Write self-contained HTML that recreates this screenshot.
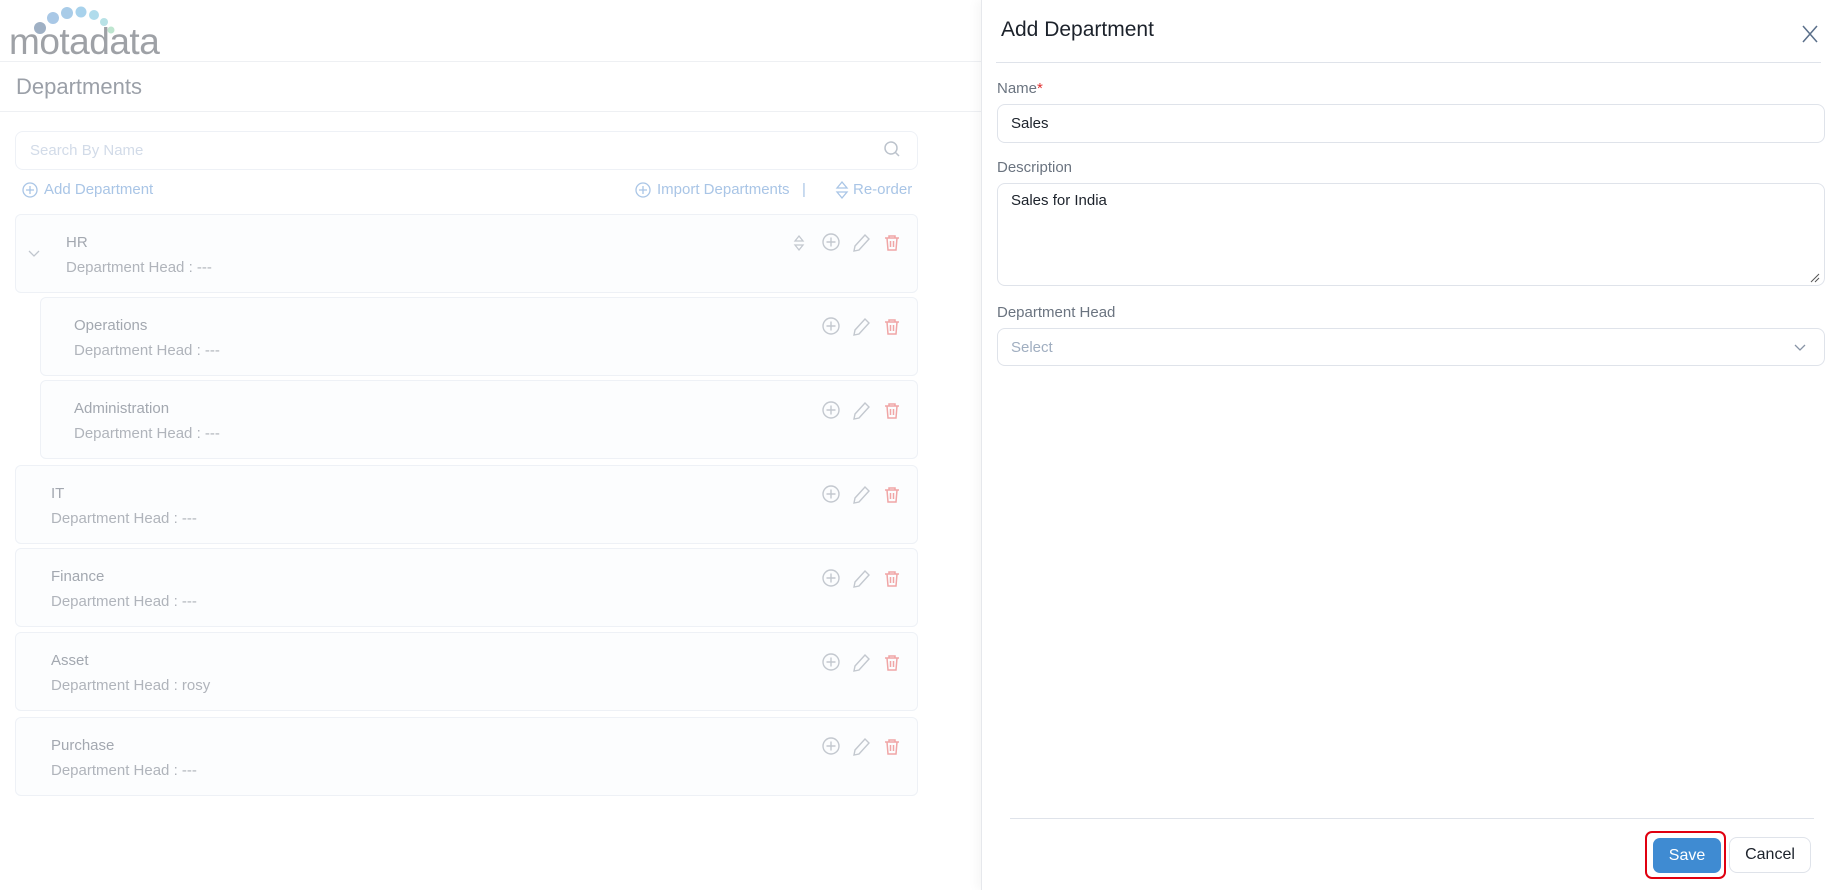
<!DOCTYPE html>
<html><head><style>
*{box-sizing:border-box;margin:0;padding:0}
body{width:1840px;height:890px;position:relative;overflow:hidden;background:#fff;font-family:"Liberation Sans",sans-serif}
.a{position:absolute}
.card{position:absolute;left:15px;width:903px;height:79px;border:1px solid #eef1f6;border-radius:6px;background:#fcfdfe}
.t{position:absolute;font-size:15px;color:#a3a8b0}
.h{position:absolute;font-size:15px;color:#b0b4bb}
</style></head><body>
<!-- left -->
<svg class="a" style="left:9px;top:6px" width="170" height="52">
<circle cx="31" cy="22" r="6" fill="#9fb0c4"/><circle cx="44" cy="12" r="6" fill="#a9c8e6"/><circle cx="58" cy="7" r="6" fill="#a9cce8"/><circle cx="72" cy="6" r="5.5" fill="#a8d2ec"/><circle cx="85" cy="9" r="5" fill="#b0dcec"/><circle cx="95" cy="16" r="4" fill="#b8e2e6"/><circle cx="102" cy="24" r="3.5" fill="#bfe6d0"/>
<text x="0" y="48" font-family="Liberation Sans" font-size="37" fill="#9ea1a6" letter-spacing="-0.5">motadata</text></svg>
<div class="a" style="left:0;top:61px;width:981px;border-top:1px solid #eef0f3"></div>
<div class="a" style="left:16px;top:74px;font-size:22px;color:#9ba0a8">Departments</div>
<div class="a" style="left:0;top:111px;width:981px;border-top:1px solid #eef0f3"></div>
<div class="a" style="left:15px;top:131px;width:903px;height:39px;border:1px solid #eef1f6;border-radius:8px"></div>
<div class="a" style="left:30px;top:142px;font-size:15px;color:#d2dbe8">Search By Name</div>
<svg class="a" style="left:883px;top:140px" width="18" height="18" fill="none" stroke="#bcc3cc" stroke-width="1.5"><circle cx="8" cy="8" r="6"/><path d="M12.5 12.5L16 16"/></svg>
<svg class="a" style="left:22px;top:182px" width="16" height="16" fill="none" stroke="#a9c5e6" stroke-width="1.3"><circle cx="8" cy="8" r="7"/><path d="M8 4v8M4 8h8"/></svg>
<div class="a" style="left:44px;top:181px;font-size:15px;color:#a9c5e6">Add Department</div>
<svg class="a" style="left:635px;top:182px" width="16" height="16" fill="none" stroke="#a9c5e6" stroke-width="1.3"><circle cx="8" cy="8" r="7"/><path d="M8 4v8M4 8h8"/></svg>
<div class="a" style="left:657px;top:181px;font-size:15px;color:#a9c5e6">Import Departments &nbsp;&nbsp;|</div>
<svg class="a" style="left:835px;top:180px" width="14" height="20" fill="none" stroke="#a9c5e6" stroke-width="1.3"><path d="M2 8L7 2l5 6zM2 12l5 6 5-6z"/></svg>
<div class="a" style="left:853px;top:181px;font-size:15px;color:#a9c5e6">Re-order</div>

<div class="card" style="top:214px"><svg class="a" style="left:12px;top:35px" width="12" height="8" fill="none" stroke="#c0c6ce" stroke-width="1.3"><path d="M1 1l5 5 5-5"/></svg><div class="t" style="left:50px;top:19px">HR</div><div class="h" style="left:50px;top:44px">Department Head : ---</div></div>
<div class="card" style="top:297px;left:40px;width:878px"><div class="t" style="left:33px;top:19px">Operations</div><div class="h" style="left:33px;top:44px">Department Head : ---</div></div>
<div class="card" style="top:380px;left:40px;width:878px"><div class="t" style="left:33px;top:19px">Administration</div><div class="h" style="left:33px;top:44px">Department Head : ---</div></div>
<div class="card" style="top:465px"><div class="t" style="left:35px;top:19px">IT</div><div class="h" style="left:35px;top:44px">Department Head : ---</div></div>
<div class="card" style="top:548px"><div class="t" style="left:35px;top:19px">Finance</div><div class="h" style="left:35px;top:44px">Department Head : ---</div></div>
<div class="card" style="top:632px"><div class="t" style="left:35px;top:19px">Asset</div><div class="h" style="left:35px;top:44px">Department Head : rosy</div></div>
<div class="card" style="top:717px"><div class="t" style="left:35px;top:19px">Purchase</div><div class="h" style="left:35px;top:44px">Department Head : ---</div></div>

<svg class="a" style="left:0;top:0" width="981" height="890">
<defs>
<g id="pl" fill="none" stroke="#c3c8cf" stroke-width="1.4"><circle cx="0" cy="0" r="8"/><path d="M0-4.5v9M-4.5 0h9"/></g>
<g id="pe" fill="none" stroke="#c3c8cf" stroke-width="1.4"><path d="M-7 9l1-5 10-11 4 4-10 11z"/></g>
<g id="tr" fill="none" stroke="#f0a5a5" stroke-width="1.5"><path d="M-7-5h14M-3-5v-2h6v2M-5-5l1 12h8l1-12M-1.5-2v6M1.5-2v6"/></g>
</defs>
<g fill="none" stroke="#c3c8cf" stroke-width="1.3"><path d="M795 241l4-5 4 5zM795 245l4 5 4-5z"/></g>
<use href="#pl" x="831" y="242"/><use href="#pe" x="861" y="242"/><use href="#tr" x="892" y="243"/>
<use href="#pl" x="831" y="326"/><use href="#pe" x="861" y="326"/><use href="#tr" x="892" y="327"/>
<use href="#pl" x="831" y="410"/><use href="#pe" x="861" y="410"/><use href="#tr" x="892" y="411"/>
<use href="#pl" x="831" y="494"/><use href="#pe" x="861" y="494"/><use href="#tr" x="892" y="495"/>
<use href="#pl" x="831" y="578"/><use href="#pe" x="861" y="578"/><use href="#tr" x="892" y="579"/>
<use href="#pl" x="831" y="662"/><use href="#pe" x="861" y="662"/><use href="#tr" x="892" y="663"/>
<use href="#pl" x="831" y="746"/><use href="#pe" x="861" y="746"/><use href="#tr" x="892" y="747"/>
</svg>

<!-- panel -->
<div class="a" style="left:981px;top:0;width:859px;height:890px;background:#fff;border-left:1px solid #e6e8ec;box-shadow:-4px 0 10px rgba(0,0,0,0.04)"></div>
<div class="a" style="left:1001px;top:18px;font-size:21px;color:#1c222b">Add Department</div>
<svg class="a" style="left:1802px;top:25px" width="16" height="18" fill="none" stroke="#5a6f8a" stroke-width="1.5"><path d="M1 1l14 16M15 1L1 17"/></svg>
<div class="a" style="left:996px;top:62px;width:825px;border-top:1px solid #dfe3ea"></div>
<div class="a" style="left:997px;top:80px;font-size:15px;color:#6b7480">Name<span style="color:#e03030">*</span></div>
<div class="a" style="left:997px;top:104px;width:828px;height:39px;border:1px solid #dfe3ea;border-radius:8px"></div>
<div class="a" style="left:1011px;top:115px;font-size:15px;color:#1c222b">Sales</div>
<div class="a" style="left:997px;top:159px;font-size:15px;color:#6b7480">Description</div>
<div class="a" style="left:997px;top:183px;width:828px;height:103px;border:1px solid #dfe3ea;border-radius:8px"></div>
<div class="a" style="left:1011px;top:192px;font-size:15px;color:#1c222b">Sales for India</div>
<svg class="a" style="left:1810px;top:273px" width="10" height="10" stroke="#555" stroke-width="1"><path d="M9 1L1 9M9 5L5 9"/></svg>
<div class="a" style="left:997px;top:304px;font-size:15px;color:#6b7480">Department Head</div>
<div class="a" style="left:997px;top:328px;width:828px;height:38px;border:1px solid #dfe3ea;border-radius:8px"></div>
<div class="a" style="left:1011px;top:339px;font-size:15px;color:#a0aec0">Select</div>
<svg class="a" style="left:1794px;top:344px" width="12" height="8" fill="none" stroke="#8894a6" stroke-width="1.3"><path d="M1 1l5 5 5-5"/></svg>
<div class="a" style="left:1010px;top:818px;width:804px;border-top:1px solid #dfe3ea"></div>
<div class="a" style="left:1645px;top:831px;width:81px;height:48px;border:2.5px solid #e00010;border-radius:7px"></div>
<div class="a" style="left:1653px;top:838px;width:68px;height:35px;background:#3f8bd2;border-radius:7px;color:#fff;font-size:16px;text-align:center;line-height:35px">Save</div>
<div class="a" style="left:1729px;top:837px;width:82px;height:36px;border:1px solid #dfe3ea;border-radius:8px;color:#1c222b;font-size:16px;text-align:center;line-height:34px">Cancel</div>
</body></html>
